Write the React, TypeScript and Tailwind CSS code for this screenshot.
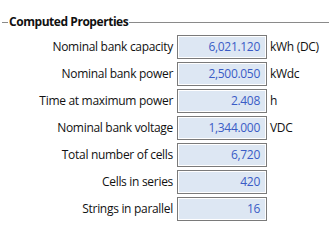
const rows = [
  { label: "Nominal bank capacity", value: "6,021.120", unit: "kWh (DC)" },
  { label: "Nominal bank power", value: "2,500.050", unit: "kWdc" },
  { label: "Time at maximum power", value: "2.408", unit: "h" },
  { label: "Nominal bank voltage", value: "1,344.000", unit: "VDC" },
  { label: "Total number of cells", value: "6,720", unit: "" },
  { label: "Cells in series", value: "420", unit: "" },
  { label: "Strings in parallel", value: "16", unit: "" },
];

export default function App() {
  return (
    <div className="w-[329px] h-[243px] bg-white overflow-hidden font-['Open_Sans',sans-serif] text-[12px] tracking-[-0.3px] text-[#111]">
      {/* Group header */}
      <div className="pt-[14px] flex items-center h-[30px]">
        <div className="ml-[2px] w-[6px] h-px bg-[#8a8a8a]" />
        <span className="ml-px font-bold leading-none tracking-[-0.45px]">Computed Properties</span>
        <div className="ml-px flex-1 h-px bg-[#8a8a8a]" />
      </div>

      <div className="mt-[5px] flex flex-col gap-[3px]">
        {rows.map((r) => (
          <div key={r.label} className="flex items-center h-[24px]">
            <div className="w-[173px] text-right">{r.label}</div>
            <div className="ml-[4px] w-[90px] h-[24px] border border-[#7a7a7a] bg-[#dde7f3] shadow-[inset_0_0_0_1px_#fff] flex items-center justify-end pr-[6px] text-[#3a5cc6]">
              {r.value}
            </div>
            <div className="ml-[3px]">{r.unit}</div>
          </div>
        ))}
      </div>
    </div>
  );
}
